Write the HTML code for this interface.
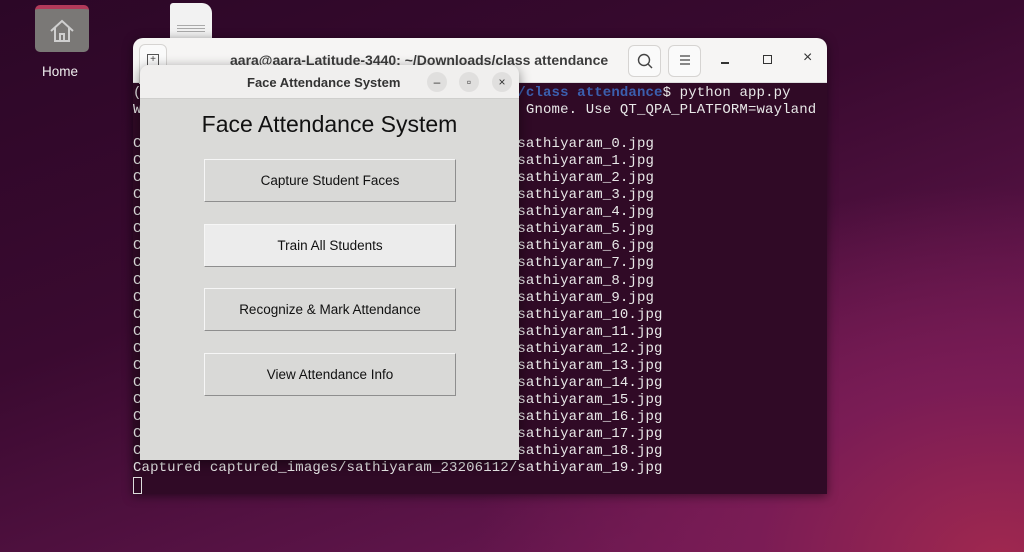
<!DOCTYPE html>
<html><head><style>
*{margin:0;padding:0;box-sizing:border-box}
body{width:1024px;height:552px;overflow:hidden;position:relative;font-family:"Liberation Sans",sans-serif;
background:radial-gradient(ellipse 700px 500px at 1000px 560px,#a0284f 0%,#7a1c55 35%,transparent 75%),linear-gradient(160deg,#2c0727 0%,#3a0a30 40%,#5c1448 75%,#7a1c5a 100%)}
.term{position:absolute;left:133px;top:38px;width:694px;height:456px;background:#300a26;border-radius:10px 10px 0 0;overflow:hidden;box-shadow:0 2px 10px rgba(0,0,0,.5)}
.tbar{height:45px;background:#f6f5f4;border-bottom:1px solid #ddd;position:relative}
.tt{position:absolute;left:97px;top:14px;font-family:"Liberation Sans",sans-serif;font-size:14px;font-weight:bold;color:#3d3d3d}
.tb{position:absolute;top:7px;width:33px;height:32px;border:1px solid #d6d4d2;border-radius:6px;background:#fafafa}
pre{position:absolute;left:0;top:47px;font-family:"Liberation Mono","DejaVu Sans Mono",monospace;font-size:14px;letter-spacing:.14px;line-height:17.05px;color:#e8e8e8}
.dlg{position:absolute;left:140px;top:65px;width:379px;height:395px;background:#dadad8;border-radius:9px 9px 0 0;overflow:hidden;box-shadow:0 3px 12px rgba(0,0,0,.45)}
.dbar{height:34px;background:#f0efee;border-bottom:1px solid #cfcfcd;position:relative}
.dt{position:absolute;left:107px;top:10px;font-family:"Liberation Sans",sans-serif;font-size:13px;font-weight:bold;color:#333}
.cb{position:absolute;top:7px;width:20px;height:20px;border-radius:50%;background:#e0dfde;font-size:12px;color:#333;text-align:center;line-height:20px}
h1{position:absolute;left:0;width:379px;top:46px;text-align:center;font-weight:normal;font-size:23px;color:#111}
.btn{position:absolute;left:64px;width:252px;height:43px;background:#d9d9d7;border:1px solid;border-color:#f6f6f6 #8e8e8e #8e8e8e #f6f6f6;text-align:center;line-height:41px;font-size:13.5px;color:#111}
</style></head><body>
<div style="position:absolute;left:35px;top:5px;width:54px;height:47px;border-radius:5px;background:#7a7876;border-top:4px solid #b23a5a"></div>
<svg style="position:absolute;left:48px;top:18px" width="28" height="26" viewBox="0 0 28 26"><path d="M3 13 L14 3 L25 13 M7 10 V23 H21 V10 M12 23 V16 H16 V23" fill="none" stroke="#cfcfcf" stroke-width="2"/></svg>
<div style="position:absolute;left:42px;top:64px;font-size:13.5px;color:#eee">Home</div>
<div style="position:absolute;left:170px;top:3px;width:42px;height:40px;background:#f2f2f2;border-radius:3px 10px 0 0"></div>
<div style="position:absolute;left:177px;top:25px;width:28px;height:1px;background:#aaa;box-shadow:0 3px 0 #aaa,0 6px 0 #aaa"></div>
<div class="term">
<div class="tbar">
<div class="tb" style="left:6px;top:6px;width:28px;height:40px;border-radius:6px 6px 0 0"></div>
<div style="position:absolute;left:14px;top:16px;width:12px;height:12px;border:1px solid #555;font-size:10px;line-height:10px;text-align:center;color:#444">+</div>
<div class="tt">aara@aara-Latitude-3440: ~/Downloads/class attendance</div>
<div class="tb" style="left:495px"></div>
<svg style="position:absolute;left:504px;top:15px" width="16" height="16"><circle cx="7" cy="7" r="5.5" fill="none" stroke="#444" stroke-width="1.4"/><path d="M11 11 L15 15" stroke="#444" stroke-width="1.4"/></svg>
<div class="tb" style="left:535px"></div>
<svg style="position:absolute;left:545px;top:15px" width="14" height="14"><path d="M2 3H12M2 7H12M2 11H12" stroke="#444" stroke-width="1.3"/></svg>
<div style="position:absolute;left:588px;top:24px;width:8px;height:2px;background:#333"></div>
<div style="position:absolute;left:630px;top:17px;width:9px;height:9px;border:1.3px solid #333"></div>
<div style="position:absolute;left:670px;top:11px;font-size:16px;color:#333">×</div>
</div>
<pre>(                                            <span style="color:#3b5fae;font-weight:bold">/class attendance</span>$ python app.py
W                                             Gnome. Use QT_QPA_PLATFORM=wayland

C                                            sathiyaram_0.jpg
C                                            sathiyaram_1.jpg
C                                            sathiyaram_2.jpg
C                                            sathiyaram_3.jpg
C                                            sathiyaram_4.jpg
C                                            sathiyaram_5.jpg
C                                            sathiyaram_6.jpg
C                                            sathiyaram_7.jpg
C                                            sathiyaram_8.jpg
C                                            sathiyaram_9.jpg
C                                            sathiyaram_10.jpg
C                                            sathiyaram_11.jpg
C                                            sathiyaram_12.jpg
C                                            sathiyaram_13.jpg
C                                            sathiyaram_14.jpg
C                                            sathiyaram_15.jpg
C                                            sathiyaram_16.jpg
C                                            sathiyaram_17.jpg
C                                            sathiyaram_18.jpg
Captured captured_images/sathiyaram_23206112/sathiyaram_19.jpg
<span style="display:inline-block;width:9px;height:17px;border:1px solid #ddd;vertical-align:top"></span></pre>
</div>
<div class="dlg">
<div class="dbar"><div class="dt">Face Attendance System</div>
<div class="cb" style="left:287px">–</div><div class="cb" style="left:319px">▫</div><div class="cb" style="left:352px">×</div></div>
<h1>Face Attendance System</h1>
<div class="btn" style="top:94px">Capture Student Faces</div>
<div class="btn" style="top:159px;background:#ececec">Train All Students</div>
<div class="btn" style="top:223px">Recognize &amp; Mark Attendance</div>
<div class="btn" style="top:288px">View Attendance Info</div>
</div>
</body></html>
